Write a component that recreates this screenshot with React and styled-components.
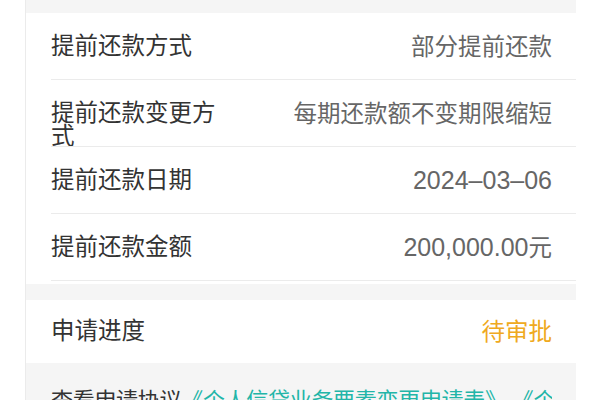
import React from "react";
import styled, { createGlobalStyle } from "styled-components";

const GlobalStyle = createGlobalStyle`
  html, body {
    margin: 0;
    padding: 0;
    background: #ffffff;
  }
  body {
    font-family: Roboto, "Noto Sans CJK SC", "Noto Sans", sans-serif;
    overflow: hidden;
  }
`;

const Page = styled.div`
  display: flex;
  width: 600px;
  height: 400px;
  overflow: hidden;
  background: #ffffff;
`;

const Gutter = styled.div`
  flex: 0 0 ${(p) => p.width}px;
  background: #ffffff;
`;

const Column = styled.div`
  flex: 0 0 551px;
  min-width: 0;
  display: flex;
  flex-direction: column;
  gap: 16px;
  padding-top: 13px;
  background: #f5f5f5;
  border-left: 1px solid #ebebeb;
  box-sizing: border-box;
  overflow: hidden;
`;

const Card = styled.div`
  background: #ffffff;
  padding-bottom: ${(p) => p.padBottom || 0}px;
`;

const Row = styled.div`
  position: relative;
  display: flex;
  align-items: center;
  justify-content: space-between;
  height: ${(p) => p.height || 67}px;
  padding: 0 24px 0 25px;
  font-size: 23.5px;

  ${(p) =>
    p.divider &&
    `
    &::after {
      content: "";
      position: absolute;
      left: 25px;
      right: 0;
      bottom: 0;
      height: 1px;
      background: #ebebeb;
    }
  `}
`;

const Label = styled.div`
  flex: 0 0 ${(p) => p.width || 200}px;
  height: 24px;
  line-height: 23px;
  color: #333333;
`;

const Value = styled.div`
  line-height: 24px;
  color: ${(p) => p.color || "#666666"};
  text-align: right;
  white-space: nowrap;
`;

const Digits = styled.span`
  font-family: "Liberation Sans", Roboto, "Noto Sans CJK SC", sans-serif;
  font-size: 25px;
`;

const Agreement = styled.p`
  margin: 0 24px 0 25px;
  padding-top: 5px;
  font-size: 22px;
  letter-spacing: -0.3px;
  line-height: 34px;
  color: #333333;
  white-space: nowrap;
  overflow: hidden;
`;

const Link = styled.span`
  color: #22b5a8;
`;

const details = [
  { label: "提前还款方式", value: "部分提前还款" },
  { label: "提前还款变更方式", value: "每期还款额不变期限缩短", labelWidth: 174 },
  { label: "提前还款日期", value: <Digits>2024–03–06</Digits> },
  { label: "提前还款金额", value: <><Digits>200,000.00</Digits>元</> },
];

export default function App() {
  return (
    <Page>
      <GlobalStyle />
      <Gutter width={25} />
      <Column>
        <Card padBottom={3}>
          {details.map((d) => (
            <Row key={d.label} divider>
              <Label width={d.labelWidth}>{d.label}</Label>
              <Value>{d.value}</Value>
            </Row>
          ))}
        </Card>
        <Card>
          <Row height={63}>
            <Label>申请进度</Label>
            <Value color="#efa920">待审批</Value>
          </Row>
        </Card>
        <Agreement>
          查看申请协议<Link>《个人信贷业务要素变更申请表》 《个人信贷</Link>
        </Agreement>
      </Column>
      <Gutter width={24} />
    </Page>
  );
}
